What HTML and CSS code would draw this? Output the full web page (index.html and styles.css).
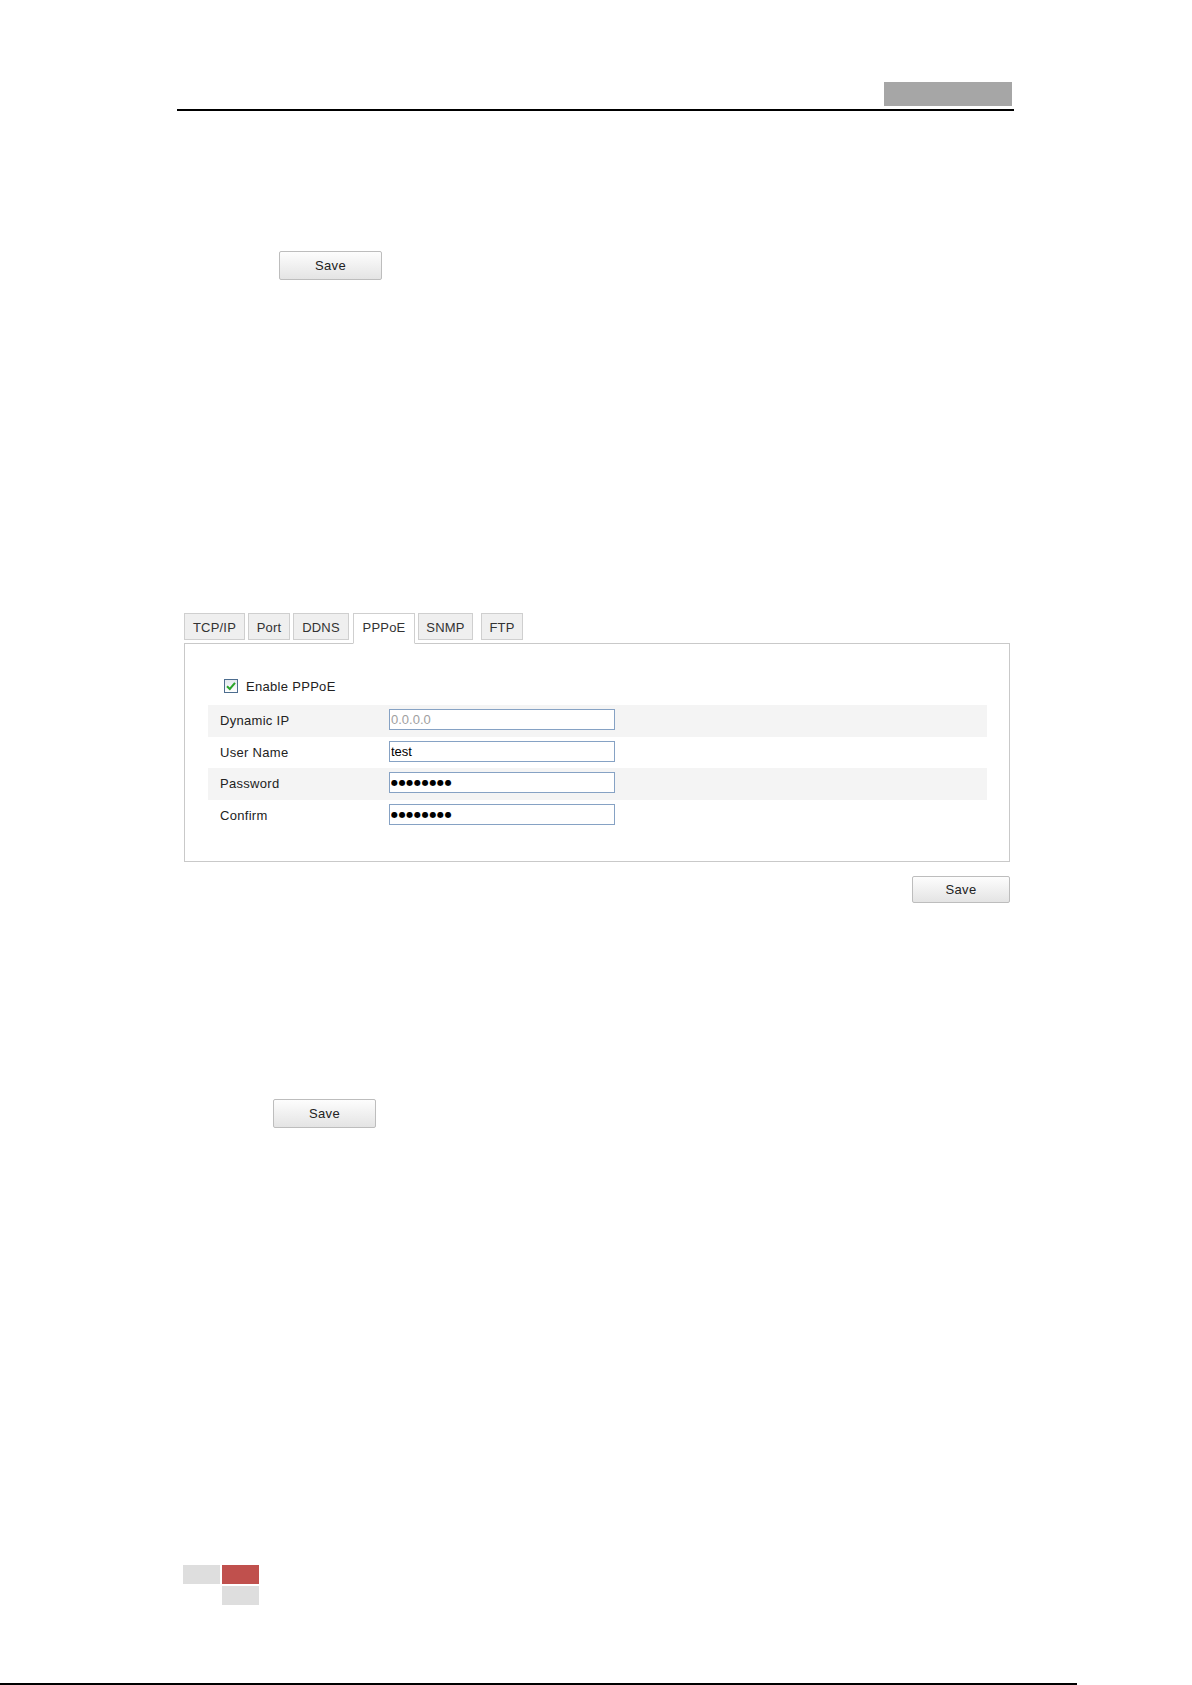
FILE: index.html
```html
<!DOCTYPE html>
<html lang="en">
<head>
    <meta charset="UTF-8">
    <meta name="viewport" content="width=device-width, initial-scale=1.0">
    <title>PPPoE Settings</title>
    <link rel="stylesheet" href="styles.css">
</head>
<body>
    <div class="header">
        <div class="header-tag"></div>
        <div class="header-rule"></div>
    </div>

    <div class="save-first">
        <button class="btn">Save</button>
    </div>

    <div class="settings">
        <ul class="tabs">
            <li class="tab tab-tcp">TCP/IP</li>
            <li class="tab tab-port">Port</li>
            <li class="tab tab-ddns">DDNS</li>
            <li class="tab tab-pppoe active">PPPoE</li>
            <li class="tab tab-snmp">SNMP</li>
            <li class="tab tab-ftp">FTP</li>
        </ul>

        <div class="panel">
            <label class="enable">
                <span class="check">
                    <svg width="12" height="12" viewBox="0 0 12 12">
                        <path d="M2 6.2 L4.8 9 L10 2.8" fill="none" stroke="#2aa52a" stroke-width="2"/>
                    </svg>
                </span>
                Enable PPPoE
            </label>

            <div class="rows">
                <div class="row shaded">
                    <span class="label">Dynamic IP</span>
                    <input class="field dim" type="text" value="0.0.0.0" readonly>
                </div>
                <div class="row">
                    <span class="label">User Name</span>
                    <input class="field" type="text" value="test">
                </div>
                <div class="row shaded">
                    <span class="label">Password</span>
                    <input class="field secret" type="text" value="●●●●●●●●">
                </div>
                <div class="row">
                    <span class="label">Confirm</span>
                    <input class="field secret" type="text" value="●●●●●●●●">
                </div>
            </div>
        </div>

        <div class="save-right">
            <button class="btn btn-small">Save</button>
        </div>
    </div>

    <div class="save-last">
        <button class="btn">Save</button>
    </div>

    <div class="footer-mark">
        <span class="cell"></span>
        <span class="cell red"></span>
        <span class="cell blank"></span>
        <span class="cell"></span>
    </div>

    <div class="footer-rule"></div>
</body>
</html>
```

FILE: styles.css
```css
body {
    margin: 0;
    background-color: #fff;
    font-family: "Liberation Sans", Arial, sans-serif;
    color: #222;
}

.header {
    margin-left: 177px;
    width: 837px;
    padding-top: 82px;
}

.header-tag {
    width: 128px;
    height: 24px;
    margin-left: auto;
    margin-right: 2px;
    background-color: #a6a6a6;
}

.header-rule {
    height: 2px;
    margin-top: 3px;
    background-color: #000;
}

.btn {
    display: block;
    width: 103px;
    height: 29px;
    padding: 0;
    border: 1px solid #bdbdbd;
    border-radius: 2px;
    background: linear-gradient(#fdfdfd, #e4e4e4);
    font-family: "Liberation Sans", Arial, sans-serif;
    font-size: 13px;
    letter-spacing: 0.3px;
    color: #222;
}

.btn-small {
    width: 98px;
    height: 27px;
}

.save-first {
    margin-top: 140px;
    margin-left: 279px;
}

.settings {
    margin-top: 333px;
    margin-left: 184px;
    width: 826px;
}

.tabs {
    display: flex;
    align-items: flex-start;
    height: 30px;
    margin: 0;
    padding: 0;
    list-style: none;
}

.tab {
    box-sizing: border-box;
    height: 27px;
    margin-right: 3px;
    padding-top: 2px;
    border: 1px solid #cfcfcf;
    background-color: #efefef;
    font-size: 13px;
    line-height: 23px;
    letter-spacing: 0.2px;
    text-align: center;
    color: #333;
}

.tab-tcp { width: 61px; }
.tab-port { width: 42px; }
.tab-ddns { width: 56px; margin-right: 4px; }
.tab-pppoe { width: 62px; }
.tab-snmp { width: 55px; margin-right: 8px; }
.tab-ftp { width: 42px; }

.tab.active {
    position: relative;
    z-index: 1;
    height: 31px;
    border-bottom-color: #fff;
    background-color: #fff;
}

.panel {
    box-sizing: border-box;
    height: 219px;
    padding: 30px 22px 0 23px;
    border: 1px solid #c9c9c9;
}

.enable {
    display: flex;
    align-items: center;
    height: 24px;
    margin-bottom: 7px;
    padding-left: 16px;
    font-size: 13px;
    letter-spacing: 0.3px;
}

.check {
    display: flex;
    align-items: center;
    justify-content: center;
    box-sizing: border-box;
    width: 14px;
    height: 14px;
    margin-right: 8px;
    border: 1px solid #4d6d8f;
    background: linear-gradient(#e3e8ee, #fff);
}

.row {
    display: flex;
    align-items: center;
    height: 31.5px;
}

.shaded {
    background-color: #f4f4f4;
}

.label {
    width: 169px;
    padding-left: 12px;
    font-size: 13px;
    letter-spacing: 0.3px;
    color: #222;
}

.field {
    box-sizing: border-box;
    width: 226px;
    height: 21px;
    margin: -2px 0 0;
    padding: 0 1px;
    border: 1px solid #86a2c4;
    font-family: "Liberation Sans", Arial, sans-serif;
    font-size: 13px;
    color: #000;
    outline: none;
}

.dim {
    color: #a0a0a0;
}

.secret {
    font-family: "DejaVu Sans", sans-serif;
    font-size: 8px;
    letter-spacing: 0.7px;
}

.save-right {
    display: flex;
    justify-content: flex-end;
    margin-top: 14px;
}

.save-last {
    margin-top: 196px;
    margin-left: 273px;
}

.footer-mark {
    display: grid;
    grid-template-columns: 37px 37px;
    grid-template-rows: 19px 19px;
    gap: 2px;
    margin-top: 437px;
    margin-left: 183px;
    width: 76px;
}

.cell {
    background-color: #dedede;
}

.cell.red {
    background-color: #c0504d;
}

.cell.blank {
    background-color: transparent;
}

.footer-rule {
    width: 1077px;
    height: 2px;
    margin-top: 78px;
    background-color: #000;
}
```
